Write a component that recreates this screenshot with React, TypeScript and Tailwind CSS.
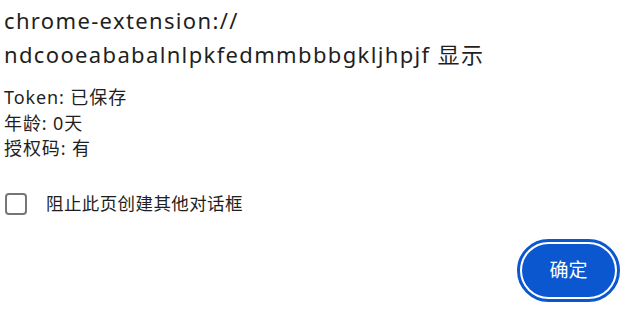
import React from 'react';

const font = { fontFamily: '"Noto Sans", "Noto Sans CJK SC", sans-serif' };

export default function App() {
  return (
    <div
      className="w-[625px] h-[323px] bg-white text-[#1f1f1f] pl-[4px] pt-[3px] overflow-hidden flex flex-col"
      style={font}
    >
      <h1 className="text-[22px] leading-[34px] font-normal tracking-[1.35px]">
        chrome-extension://
        <br />
        ndcooeababalnlpkfedmmbbbgkljhpjf 显示
      </h1>

      <div className="mt-[14px] text-[18px] leading-[25.5px] tracking-[0.9px]">
        <div>Token: 已保存</div>
        <div>年龄: 0天</div>
        <div>授权码: 有</div>
      </div>

      <label className="mt-[30px] flex items-center h-[24px]">
        <span className="ml-[1px] w-[22px] h-[22px] rounded-[4px] border-[2.5px] border-[#767676] bg-white" />
        <span className="ml-[19px] text-[17.5px] tracking-[0.4px]">阻止此页创建其他对话框</span>
      </label>

      <div className="mt-[23px] flex justify-end pr-[5px]">
        <div className="rounded-full border-[3px] border-[#0b57d0] p-[2px] bg-white">
          <button className="w-[93px] h-[53px] rounded-full bg-[#0b57d0] text-white text-[19px] flex items-center justify-center">
            确定
          </button>
        </div>
      </div>
    </div>
  );
}
